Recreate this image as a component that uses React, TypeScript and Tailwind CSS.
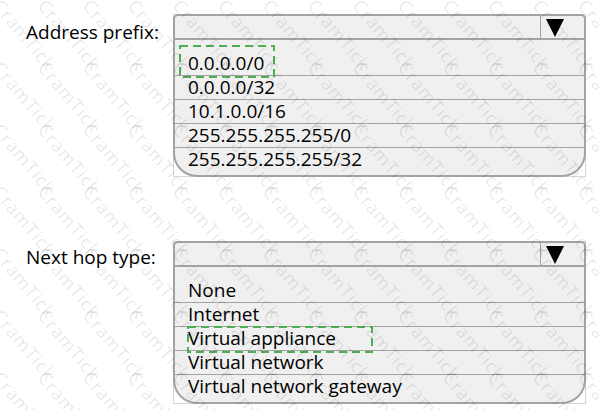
import React from "react";

const PREFIXES = ["0.0.0.0/0", "0.0.0.0/32", "10.1.0.0/16", "255.255.255.255/0", "255.255.255.255/32"];
const HOPS = ["None", "Internet", "Virtual appliance", "Virtual network", "Virtual network gateway"];

const WATERMARK_CELLS = Array.from({ length: 14 * 8 });

function DashedMark({ className, w, h }: { className: string; w: number; h: number }) {
  return (
    <svg className={`absolute pointer-events-none ${className}`} width={w} height={h}>
      <rect x={1} y={1} width={w - 2} height={h - 2} fill="none" stroke="#4caf50" strokeWidth={2} strokeDasharray="8 5" />
    </svg>
  );
}

function DropList({ items, markIndex, mark }: { items: string[]; markIndex: number; mark: React.ReactNode }) {
  return (
    // faint square frame that shows behind the rounded bottom corners
    <div className="w-[413px] border border-[#d6d6d6]">
      <div className="-m-px border-2 border-[#a3a3a3] rounded-t-[5px] rounded-b-[24px] bg-[#f0f0f0] overflow-hidden">
        <div className="h-[24px] flex justify-end border-b-2 border-[#a3a3a3]">
          <div className="w-[44px] border-l border-[#a3a3a3] flex items-center pl-[5px]">
            <svg width="18" height="18" viewBox="0 0 18 18" className="mt-[2px]">
              <path d="M0 0 H18 L9 18 Z" fill="#000" />
            </svg>
          </div>
        </div>
        {items.map((item, i) => (
          <div
            key={item}
            className={`relative pl-[13px] text-[19px] leading-[23px] text-black ${
              i === 0 ? "pt-[12px]" : ""
            } ${i === items.length - 1 ? "h-[27px]" : "border-b border-[#a3a3a3]"}`}
          >
            {item}
            {i === markIndex && mark}
          </div>
        ))}
      </div>
    </div>
  );
}

export default function App() {
  return (
    <div
      className="relative w-[599px] h-[410px] bg-white overflow-hidden pt-[14px]"
      style={{ fontFamily: '"Open Sans", "Noto Sans", Arial, sans-serif' }}
    >
      <div className="flex">
        <div className="w-[173px] pl-[26px] mt-[6px] text-[19px] leading-[24px] text-black">Address prefix:</div>
        <DropList
          items={PREFIXES}
          markIndex={0}
          mark={<DashedMark className="left-[4px] top-[5px]" w={96} h={33} />}
        />
      </div>

      <div className="flex mt-[64px]">
        <div className="w-[173px] pl-[26px] mt-[4px] text-[19px] leading-[24px] text-black">Next hop type:</div>
        <DropList
          items={HOPS}
          markIndex={2}
          mark={<DashedMark className="left-[12px] top-[-1px]" w={186} h={27} />}
        />
      </div>

      {/* watermark */}
      <div className="absolute left-[4px] top-[-4px] grid grid-cols-[repeat(14,45px)] auto-rows-[62px] pointer-events-none">
        {WATERMARK_CELLS.map((_, i) => (
          <span
            key={i}
            className="block origin-top-left rotate-[50deg] whitespace-nowrap text-[18px] tracking-[1px] leading-none text-black/10"
          >
            CramTick
          </span>
        ))}
      </div>
    </div>
  );
}
